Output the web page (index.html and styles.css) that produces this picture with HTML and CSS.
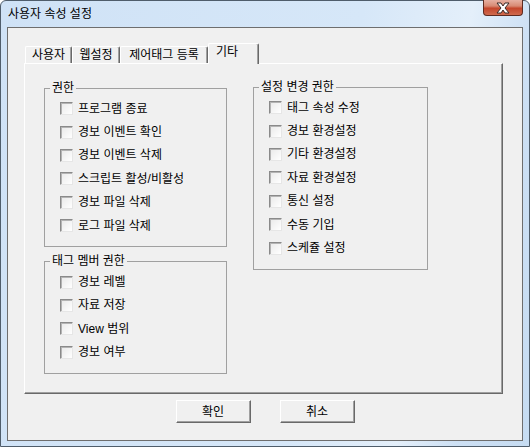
FILE: index.html
```html
<!DOCTYPE html>
<html lang="ko">
<head>
    <meta charset="UTF-8">
    <title>사용자 속성 설정</title>
    <link rel="stylesheet" href="styles.css">
</head>
<body>
<div class="ventana">
    <div class="titulo">
        <span class="titulo-texto">사용자 속성 설정</span>
        <div class="cerrar">
            <svg width="18" height="12" viewBox="0 0 18 12">
                <path d="M3 1 H7 L9 4 L11 1 H15 L11 6 L15 11 H11 L9 8 L7 11 H3 L7 6 Z" fill="#fff" stroke="#3a2a28" stroke-width="1" stroke-linejoin="round"/>
            </svg>
        </div>
    </div>
    <div class="cliente">
        <div class="pestanas">
            <div class="tabs">
                <div class="tab t1">사용자</div>
                <div class="tab t2">웹설정</div>
                <div class="tab t3">제어태그 등록</div>
                <div class="tab activa">기타</div>
            </div>
            <div class="panel">
                <div class="columna izq">
                    <fieldset class="grupo g1">
                        <legend>권한</legend>
                        <label class="fila"><span class="caja"></span>프로그램 종료</label>
                        <label class="fila"><span class="caja"></span>경보 이벤트 확인</label>
                        <label class="fila"><span class="caja"></span>경보 이벤트 삭제</label>
                        <label class="fila"><span class="caja"></span>스크립트 활성/비활성</label>
                        <label class="fila"><span class="caja"></span>경보 파일 삭제</label>
                        <label class="fila"><span class="caja"></span>로그 파일 삭제</label>
                    </fieldset>
                    <fieldset class="grupo g2">
                        <legend>태그 멤버 권한</legend>
                        <label class="fila"><span class="caja"></span>경보 레벨</label>
                        <label class="fila"><span class="caja"></span>자료 저장</label>
                        <label class="fila"><span class="caja"></span>View 범위</label>
                        <label class="fila"><span class="caja"></span>경보 여부</label>
                    </fieldset>
                </div>
                <div class="columna der">
                    <fieldset class="grupo g3">
                        <legend>설정 변경 권한</legend>
                        <label class="fila"><span class="caja"></span>태그 속성 수정</label>
                        <label class="fila"><span class="caja"></span>경보 환경설정</label>
                        <label class="fila"><span class="caja"></span>기타 환경설정</label>
                        <label class="fila"><span class="caja"></span>자료 환경설정</label>
                        <label class="fila"><span class="caja"></span>통신 설정</label>
                        <label class="fila"><span class="caja"></span>수동 기입</label>
                        <label class="fila"><span class="caja"></span>스케쥴 설정</label>
                    </fieldset>
                </div>
            </div>
        </div>
        <div class="botones">
            <button class="boton">확인</button>
            <button class="boton">취소</button>
        </div>
    </div>
</div>
</body>
</html>
```

FILE: styles.css
```css
body {
    margin: 0;
    background: #fff;
    font-family: "Liberation Sans", "Noto Sans CJK KR", sans-serif;
    font-size: 12px;
    color: #000;
}
.ventana {
    width: 530px;
    height: 447px;
    box-sizing: border-box;
    border: 1px solid #4f5d6b;
    border-radius: 6px 6px 0 0;
    background: linear-gradient(100deg, #cfe2f6 0%, #d6e7f8 60%, #e4effa 78%, #cde0f4 88%, #c6dcf2 100%);
    padding: 0 6px 5px 6px;
    display: flex;
    flex-direction: column;
}
.titulo {
    height: 26px;
    display: flex;
    justify-content: space-between;
    align-items: flex-start;
}
.titulo-texto {
    margin: 6px 0 0 1px;
    line-height: 14px;
}
.cerrar {
    width: 40px;
    height: 16px;
    margin-top: -1px;
    box-sizing: border-box;
    border: 1px solid #5e2a20;
    border-top: none;
    border-radius: 0 0 4px 4px;
    background: linear-gradient(#e6b0a2 0%, #d88a74 40%, #c4462c 55%, #cf6a4e 100%);
    display: flex;
    justify-content: center;
    align-items: center;
}
.cliente {
    flex: 1;
    border: 1px solid #6e6e6e;
    background: #f0f0f0;
    display: flex;
    flex-direction: column;
}
.pestanas {
    margin: 15px 19px 0 16px;
}
.tabs {
    display: flex;
    align-items: flex-end;
    padding-left: 1px;
    height: 20px;
}
.tab {
    height: 17px;
    box-sizing: border-box;
    border-top: 1px solid #fff;
    border-left: 1px solid #fff;
    border-right: 1px solid #696969;
    box-shadow: inset -1px 0 #a0a0a0;
    border-radius: 2px 2px 0 0;
    padding-top: 1px;
    line-height: 14px;
    text-align: center;
}
.t1 { width: 47px; }
.t2 { width: 48px; }
.t3 { width: 88px; }
.activa {
    width: 51px;
    height: 21px;
    margin-bottom: -1px;
    position: relative;
    z-index: 1;
    background: #f0f0f0;
    text-align: left;
    padding-left: 7px;
}
.panel {
    height: 331px;
    box-sizing: border-box;
    border-top: 1px solid #fff;
    border-left: 1px solid #fff;
    border-right: 1px solid #696969;
    border-bottom: 1px solid #696969;
    box-shadow: inset -1px -1px #a0a0a0;
    padding: 17px 0 0 19px;
    display: flex;
    gap: 26px;
    align-items: flex-start;
}
.izq {
    width: 183px;
    margin-top: 0;
}
.der {
    width: 175px;
    margin-top: -1px;
}
.grupo {
    margin: 0;
    padding: 2px 0 9px 0;
    border: 1px solid #a0a0a0;
    min-width: 0;
}
.grupo legend {
    margin-left: 5px;
    padding: 0 2px;
    line-height: 14px;
}
.g2 {
    margin-top: 7px;
}
.fila {
    display: flex;
    align-items: center;
    height: 23.4px;
    padding-left: 15px;
    line-height: 14px;
    white-space: nowrap;
}
.caja {
    width: 13px;
    height: 13px;
    box-sizing: border-box;
    border: 1px solid;
    border-color: #8a8a8a #e6e6e6 #e6e6e6 #8a8a8a;
    box-shadow: inset 1px 1px #b4b4b4;
    background: linear-gradient(135deg, #e9e9e9, #fff);
    margin-right: 5px;
    flex-shrink: 0;
}
.botones {
    display: flex;
    justify-content: center;
    gap: 29px;
    margin-top: 6px;
}
.boton {
    width: 75px;
    height: 23px;
    box-sizing: border-box;
    font-family: inherit;
    font-size: 12px;
    color: #000;
    background: #f0f0f0;
    border: 1px solid;
    border-color: #fff #696969 #696969 #fff;
    box-shadow: inset -1px -1px #a0a0a0;
    padding: 0;
    line-height: 14px;
}
```
